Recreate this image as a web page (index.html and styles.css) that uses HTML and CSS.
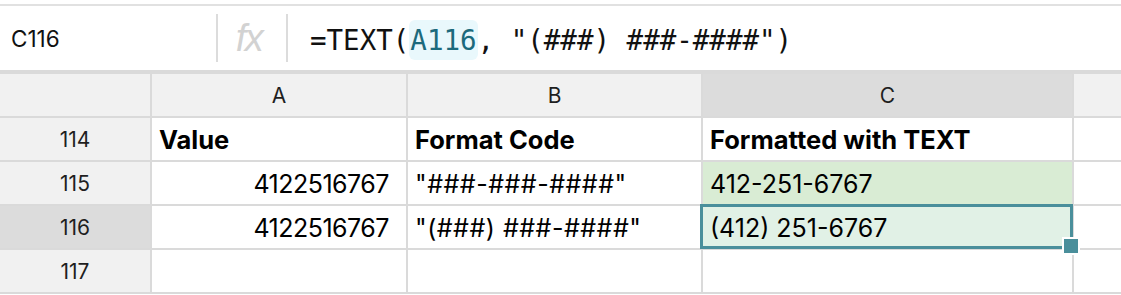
FILE: index.html
```html
<!DOCTYPE html>
<html>
<head>
<meta charset="utf-8">
<link rel="stylesheet" href="styles.css">
</head>
<body>
<div class="page">
  <div class="formula-bar">
    <div class="namebox">C116</div>
    <div class="sep"></div>
    <div class="fx">
      <span class="fx-text">fx</span>
    </div>
    <div class="sep"></div>
    <div class="formula">=TEXT(<span class="ref">A116</span>, "(###) ###-####")</div>
  </div>
  <div class="grid">
    <div class="hd corner"></div>
    <div class="hd col">A</div>
    <div class="hd col">B</div>
    <div class="hd col sel">C</div>
    <div class="hd col"></div>

    <div class="hd row">114</div>
    <div class="cell bold">Value</div>
    <div class="cell bold">Format Code</div>
    <div class="cell bold">Formatted with TEXT</div>
    <div class="cell"></div>

    <div class="hd row">115</div>
    <div class="cell num">4122516767</div>
    <div class="cell code">"###-###-####"</div>
    <div class="cell green">412-251-6767</div>
    <div class="cell"></div>

    <div class="hd row sel">116</div>
    <div class="cell num">4122516767</div>
    <div class="cell code">"(###) ###-####"</div>
    <div class="cell active">(412) 251-6767<span class="handle"></span></div>
    <div class="cell"></div>

    <div class="hd row">117</div>
    <div class="cell"></div>
    <div class="cell"></div>
    <div class="cell"></div>
    <div class="cell"></div>
  </div>
</div>
</body>
</html>
```
FILE: styles.css
```css
html, body {
  margin: 0;
  padding: 0;
  background: #ffffff;
}
.page {
  width: 1121px;
  height: 295px;
  overflow: hidden;
  font-family: Inter, "Noto Sans", sans-serif;
  color: #000;
  padding-top: 4px;
  box-sizing: border-box;
}
.formula-bar {
  border-top: 2px solid #e1e1e1;
  border-bottom: 4px solid #dadada;
  height: 64px;
  display: flex;
  align-items: center;
  background: #fff;
}
.namebox {
  width: 205px;
  padding-left: 11px;
  font-size: 22.5px;
  color: #111;
}
.sep {
  width: 2px;
  height: 48px;
  background: #dcdcdc;
}
.fx {
  width: 68px;
  display: flex;
  justify-content: center;
}
.fx-text {
  font-family: "Liberation Sans", sans-serif;
  font-style: italic;
  font-size: 38px;
  color: #d2d2d2;
  letter-spacing: -1.5px;
  padding-right: 6px;
}
.formula {
  padding: 4px 0 0 22px;
  font-family: "DejaVu Sans Mono", monospace;
  font-size: 27.5px;
  color: #111;
  white-space: pre;
}
.ref {
  color: #1c6a7c;
  background: #e9f8fc;
  border-radius: 6px;
  padding: 4px 1px;
}
.grid {
  display: grid;
  grid-template-columns: 150px 254px 293px 369px 1fr;
  grid-auto-rows: 42px;
  gap: 2px;
  background: #dadada;
  padding-bottom: 2px;
}
.hd {
  background: #f1f1f1;
  display: flex;
  align-items: center;
  justify-content: center;
  font-size: 21px;
  color: #1f1f1f;
}
.hd.sel {
  background: #dcdcdc;
}
.cell {
  background: #fff;
  display: flex;
  align-items: center;
  padding: 1px 7px 0;
  font-size: 25px;
  white-space: nowrap;
  position: relative;
}
.cell.bold {
  font-weight: 700;
  font-size: 25.5px;
}
.cell.code {
  letter-spacing: 0.5px;
}
.cell.num {
  justify-content: flex-end;
  padding-right: 17px;
  letter-spacing: -0.5px;
}
.cell.green {
  background: #d9ecd4;
}
.cell.active {
  background: #e1f1e6;
}
.cell.active::after {
  content: "";
  position: absolute;
  left: -3px;
  top: -2px;
  right: -1px;
  bottom: -1px;
  border: 3.5px solid #4a8f9b;
}
.handle {
  position: absolute;
  right: -8px;
  bottom: -7px;
  width: 14px;
  height: 14px;
  background: #4a8f9b;
  border: 2px solid #fff;
  z-index: 2;
}
```
